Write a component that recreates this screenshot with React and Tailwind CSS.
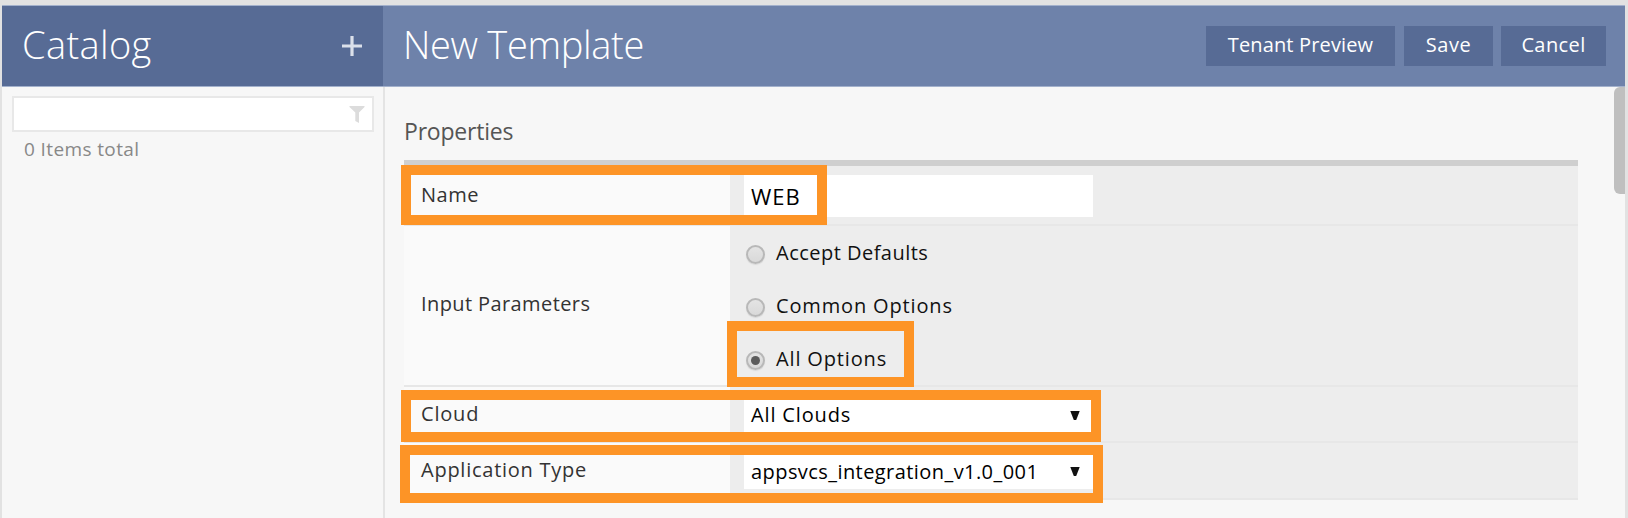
import React from "react";

function HeaderButton({ className, children }) {
  return (
    <button className={`flex h-10 items-center justify-center bg-[#576b95] pb-0.5 text-[20px] text-white ${className}`}>
      {children}
    </button>
  );
}

function Row({ label, labelClass = "", className, children }) {
  return (
    <div className={`flex border-b-2 border-[#e7e7e7] ${className}`}>
      <div className={`flex w-[326px] shrink-0 items-center bg-[#fafafa] pl-[17px] text-[20px] text-[#333] ${labelClass}`}>
        {label}
      </div>
      <div className="min-w-0 grow bg-[#ededed] pl-3.5">{children}</div>
    </div>
  );
}

function Radio({ checked, label, className }) {
  return (
    <label className="flex h-[53px] items-center">
      <span className="mt-[4px] ml-[2px] flex size-[19px] items-center justify-center rounded-full border-2 border-[#b8b8b8] bg-linear-to-b from-[#e4e4e4] to-[#d9d9d9] shadow-[0_1px_1px_#d8d8d8]">
        {checked && <span className="size-[9px] rounded-full bg-[#5c5c5c]" />}
      </span>
      <span className={`ml-[11px] text-[20px] text-[#111] ${className}`}>{label}</span>
    </label>
  );
}

function Select({ value, className, textClass }) {
  return (
    <div className={`flex w-[349px] items-center justify-between bg-white pr-[13px] pl-[7px] text-[20px] text-black ${className}`}>
      <span className={textClass}>{value}</span>
      <svg width="10" height="9" viewBox="0 0 10 9">
        <path d="M0.3 0H9.7L6.2 9H3.8Z" fill="#111" />
      </svg>
    </div>
  );
}

function Highlight({ className }) {
  return <div className={`pointer-events-none absolute border-10 border-[#fd9426] ${className}`} />;
}

export default function App() {
  return (
    <div className="relative flex h-[518px] w-[1628px] overflow-hidden border-t-5 border-r-3 border-l-2 border-[#e2e2e2] bg-[#f7f7f7] font-['Open_Sans',sans-serif] whitespace-nowrap">
      <aside className="flex w-[383px] shrink-0 flex-col">
        <header className="flex h-[82px] w-[381px] items-center justify-between border-y border-[#a3b1cc] bg-[#576b95] pr-[21px] pl-[20px]">
          <h1 className="pb-[4px] text-[38px] font-light tracking-[0.35px] text-white">Catalog</h1>
          <svg width="20" height="20" viewBox="0 0 20 20">
            <path d="M10 0V20M0 10H20" stroke="#dbe0ea" strokeWidth="3.2" />
          </svg>
        </header>
        <div className="grow border-r-2 border-[#e4e4e4] pl-[10px]">
          <div className="mt-[9px] flex h-9 w-[362px] items-center justify-end border-2 border-[#e8e8e8] bg-white pr-[7px]">
            <svg width="16" height="17" viewBox="0 0 16 17">
              <path d="M0.5 0H15.5V1L10 6.5V17L6.3 15V6.5L0.5 1Z" fill="#dcdcdc" />
            </svg>
          </div>
          <p className="mt-[3px] pl-[12px] text-[19px] leading-[28px] tracking-[0.38px] text-[#888]">0 Items total</p>
        </div>
      </aside>
      <main className="flex grow flex-col">
        <header className="-ml-0.5 flex h-[82px] items-center border-y border-[#a3b1cc] bg-[#6e82aa] pr-[19px] pl-[20px]">
          <h2 className="grow pb-[4px] text-[38px] font-light tracking-[-0.33px] text-white">New Template</h2>
          <HeaderButton className="w-[189px] tracking-[0.15px]">Tenant Preview</HeaderButton>
          <HeaderButton className="ml-[9px] w-[89px] tracking-[0.5px]">Save</HeaderButton>
          <HeaderButton className="ml-2 w-[105px] tracking-[0.4px]">Cancel</HeaderButton>
        </header>
        <div className="flex grow justify-between pl-[19px]">
          <section className="w-[1174px]">
            <h3 className="mt-[27px] h-[46px] text-[23px] leading-[34px] tracking-[-0.2px] text-[#555]">Properties</h3>
            <div className="border-t-6 border-[#cfcfcf]">
              <Row label="Name" className="h-[60px]" labelClass="tracking-[0.5px] pb-px">
                <div className="mt-[9px] flex h-[42px] w-[349px] items-center bg-white pl-[7px] text-[22px] tracking-[1px] text-black">WEB</div>
              </Row>
              <Row label="Input Parameters" className="h-[161px]" labelClass="tracking-[0.4px] pb-[3px]">
                <Radio label="Accept Defaults" className="tracking-[0.48px]" />
                <Radio label="Common Options" className="tracking-[0.85px]" />
                <Radio label="All Options" checked className="tracking-[0.85px]" />
              </Row>
              <Row label="Cloud" className="h-[56px]" labelClass="tracking-[0.8px] pb-px">
                <Select value="All Clouds" className="mt-2 h-10" textClass="tracking-[0.85px]" />
              </Row>
              <Row label="Application Type" className="h-[57px]" labelClass="tracking-[0.75px] pb-px">
                <Select value="appsvcs_integration_v1.0_001" className="mt-2 h-[38px] pt-[3px]" textClass="tracking-[0.43px]" />
              </Row>
            </div>
          </section>
          <div className="h-[107px] w-[11px] rounded-l-md bg-[#bfbfbf]" />
        </div>
      </main>
      <Highlight className="top-[160px] left-[399px] h-[60px] w-[426px]" />
      <Highlight className="top-[316px] left-[725px] h-[66px] w-[187px]" />
      <Highlight className="top-[385px] left-[399px] h-[52px] w-[700px]" />
      <Highlight className="top-[440px] left-[398px] h-[58px] w-[703px]" />
    </div>
  );
}
